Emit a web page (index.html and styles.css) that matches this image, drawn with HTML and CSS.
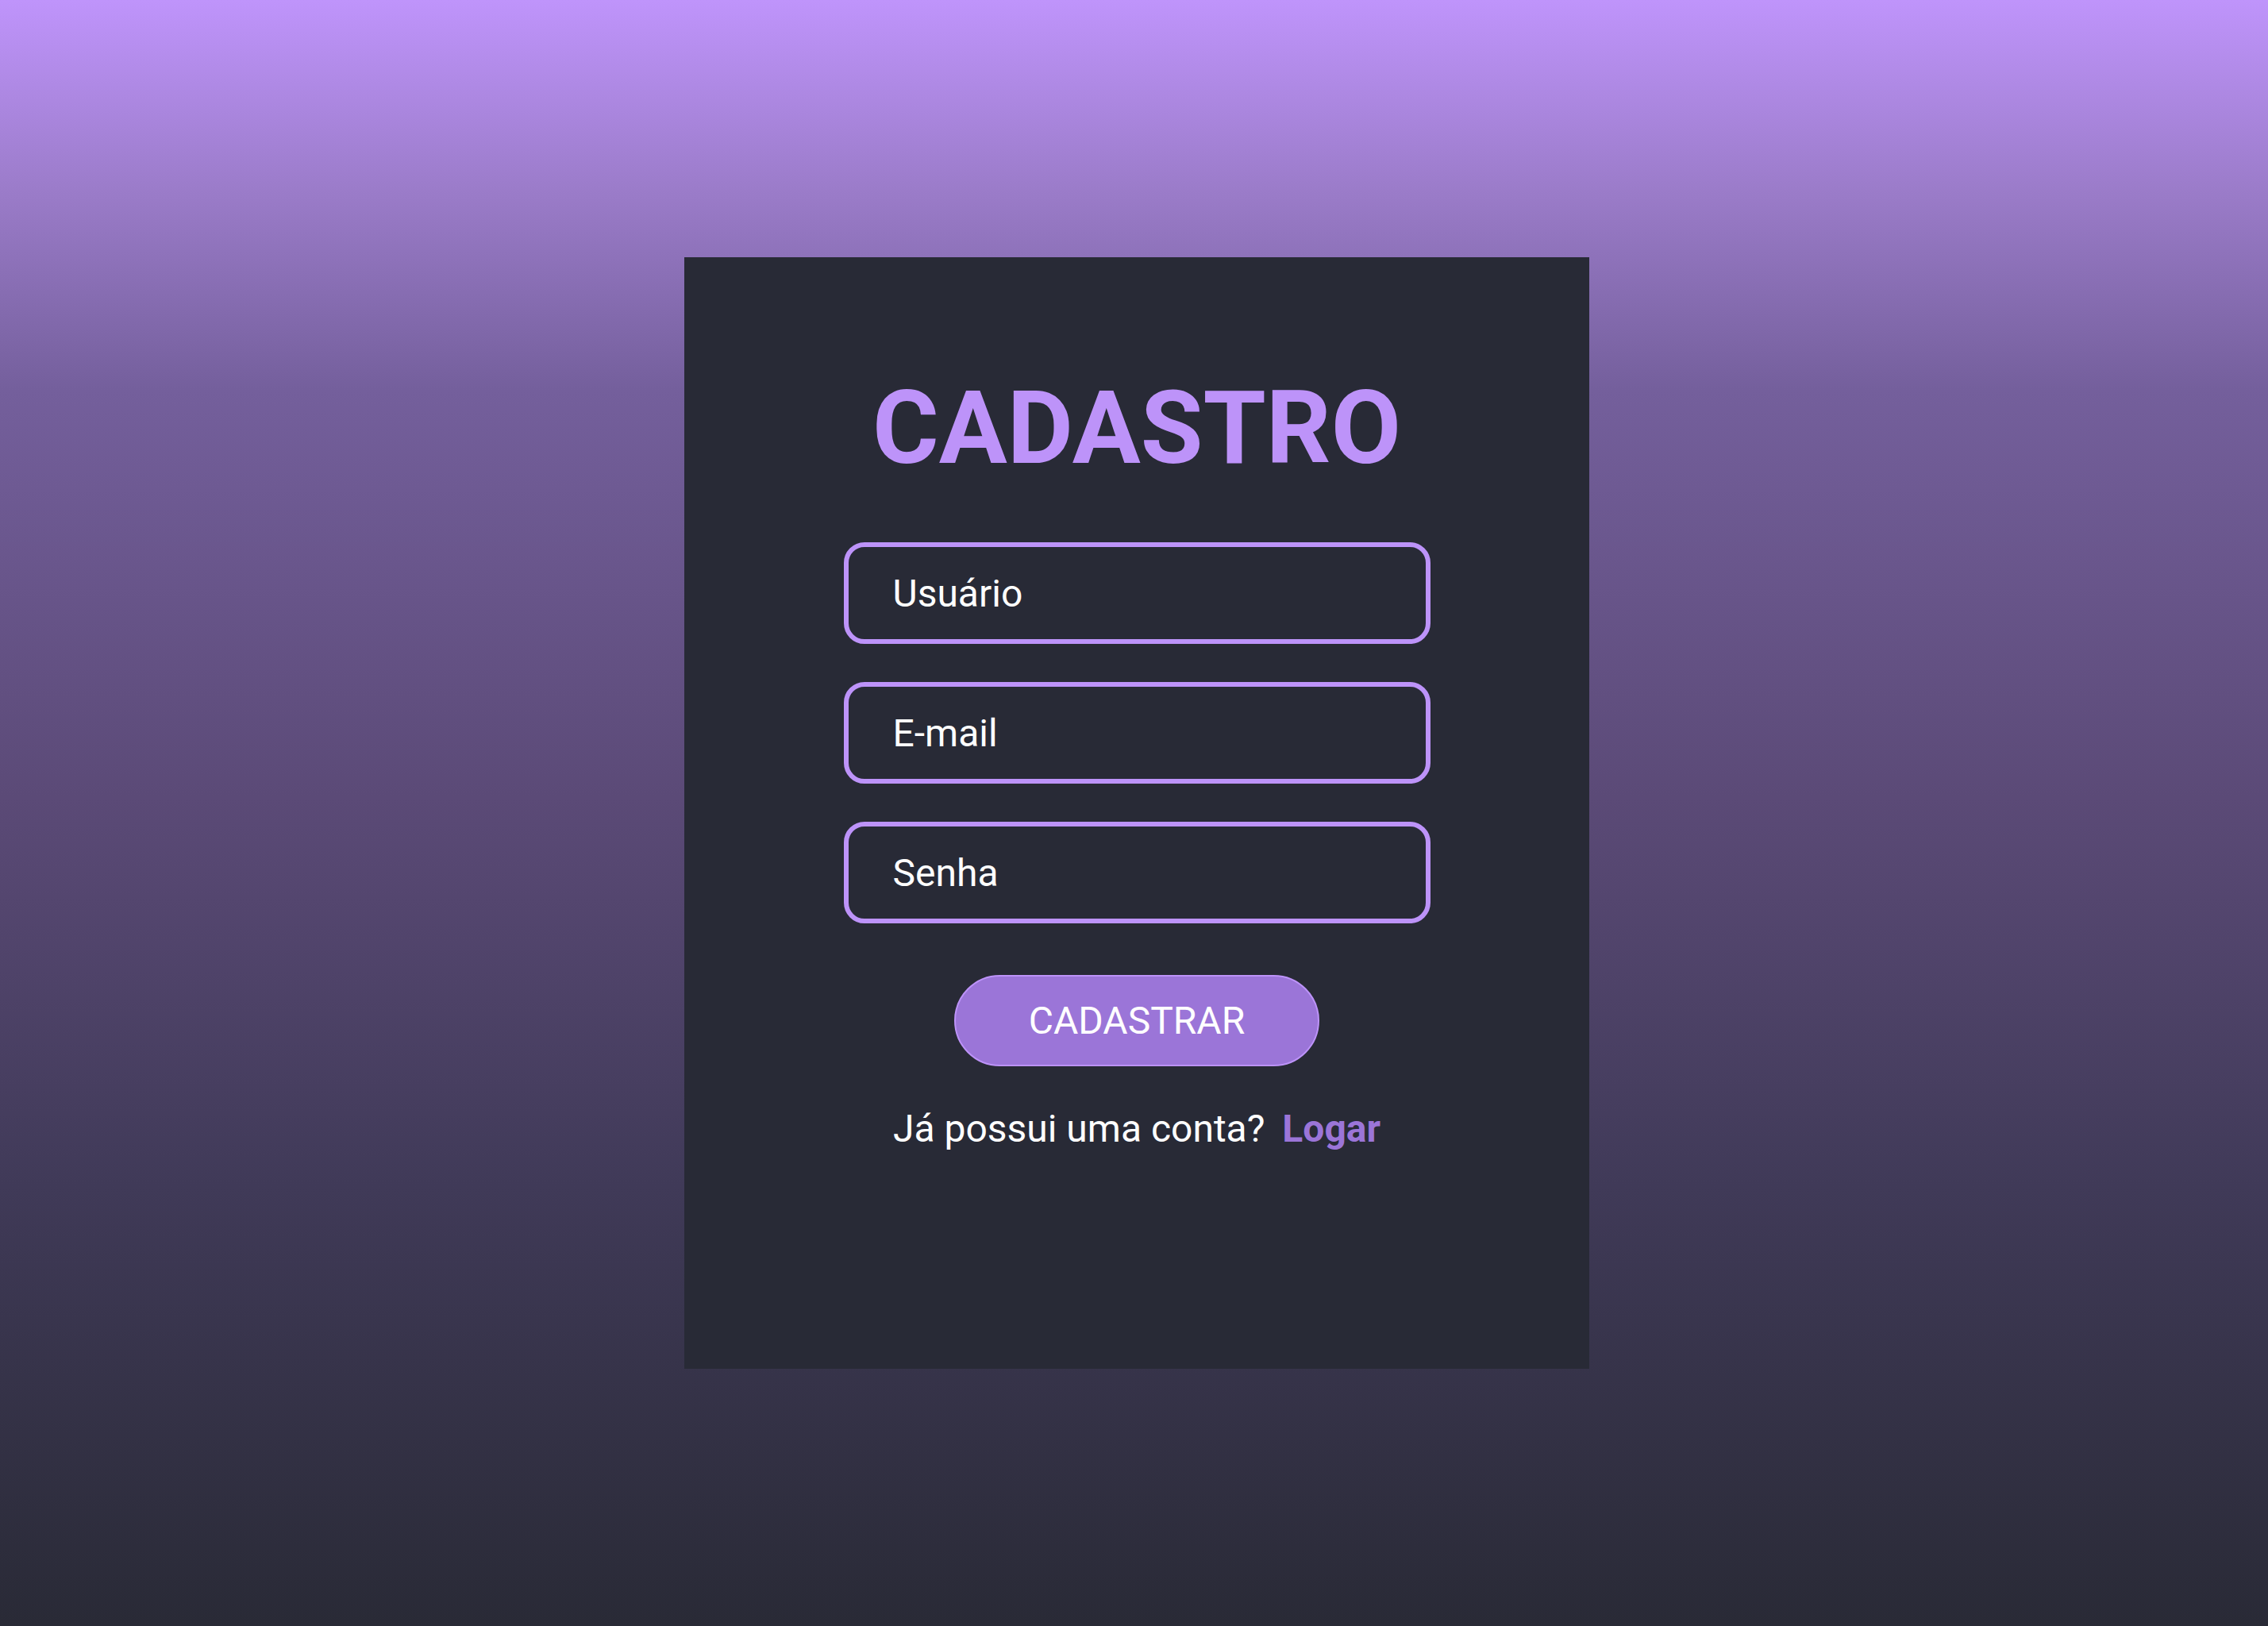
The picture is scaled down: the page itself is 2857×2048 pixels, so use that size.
FILE: index.html
```html
<!DOCTYPE html>
<html lang="pt-BR">
<head>
<meta charset="utf-8">
<title>Cadastro</title>
<link rel="stylesheet" href="styles.css">
</head>
<body>
<main class="page">
  <form class="card" onsubmit="return false;">
    <h1 class="title">CADASTRO</h1>
    <div class="fields">
      <input class="field" type="text" placeholder="Usuário">
      <input class="field" type="email" placeholder="E-mail">
      <input class="field" type="password" placeholder="Senha">
    </div>
    <button class="submit" type="submit">CADASTRAR</button>
    <p class="switch">Já possui uma conta? <a class="switch-link" href="#">Logar</a></p>
  </form>
</main>
</body>
</html>
```
FILE: styles.css
```css
* { box-sizing: border-box; }

html, body {
  margin: 0;
  padding: 0;
  height: 100%;
}

body {
  font-family: Roboto, "Liberation Sans", sans-serif;
  background: linear-gradient(to bottom,
    #bf94fb 0%,
    #9a7bc8 12%,
    #745f9c 24%,
    #5b4a77 49%,
    #403a58 73%,
    #292a36 100%);
}

.page {
  height: 100%;
  display: flex;
  align-items: center;
  justify-content: center;
  padding-left: 7px;
}

.card {
  width: 1140px;
  height: 1400px;
  background: #282a36;
  display: flex;
  flex-direction: column;
  align-items: center;
  padding-top: 140px;
}

.title {
  margin: 0;
  font-size: 128px;
  font-weight: 700;
  color: #bd93f9;
  line-height: normal;
}

.fields {
  margin-top: 69px;
  display: flex;
  flex-direction: column;
  gap: 48px;
}

.field {
  width: 739px;
  height: 128px;
  border: 6px solid #bd93f9;
  border-radius: 26px;
  background: #282a36;
  padding: 0 0 0 56px;
  font-family: Roboto, "Liberation Sans", sans-serif;
  font-size: 48px;
  color: #ffffff;
  outline: none;
}

.field::placeholder {
  color: #ffffff;
  opacity: 1;
}

.submit {
  margin-top: 65px;
  width: 460px;
  height: 115px;
  border: 2px solid #bd93f9;
  border-radius: 58px;
  background: #9b75d8;
  color: #ffffff;
  font-family: Roboto, "Liberation Sans", sans-serif;
  font-size: 48px;
  font-weight: 400;
  cursor: pointer;
}

.switch {
  margin: 50px 0 0;
  font-size: 48px;
  color: #ffffff;
  line-height: normal;
}

.switch-link {
  margin-left: 10px;
  color: #9b75d8;
  font-weight: 700;
  text-decoration: none;
}
```
